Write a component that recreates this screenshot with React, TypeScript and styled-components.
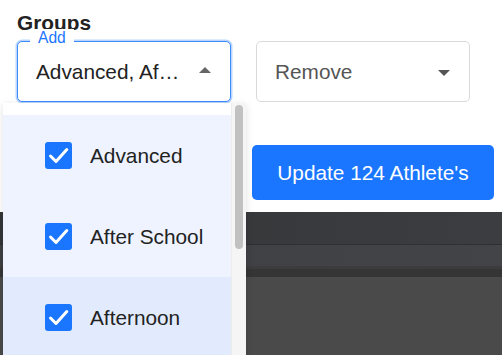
import React from "react";
import styled, { createGlobalStyle } from "styled-components";

const GlobalStyle = createGlobalStyle`
  html, body {
    margin: 0;
    padding: 0;
    overflow: hidden;
    background: #ffffff;
  }
  body {
    font-family: "Liberation Sans", Arial, Helvetica, sans-serif;
    -webkit-font-smoothing: antialiased;
  }
`;

const Page = styled.div`
  width: 502px;
  height: 355px;
  display: flex;
  flex-direction: column;
  overflow: hidden;
`;

const Top = styled.section`
  position: relative;
  z-index: 2;
  padding: 11px 8px 12px 17px;
  background: #ffffff;
`;

const Heading = styled.div`
  font-size: 20.8px;
  line-height: 24px;
  font-weight: 700;
  color: #222222;
`;

const SelectRow = styled.div`
  display: flex;
  gap: 25px;
  margin-top: 6px;
`;

const SelectBox = styled.div<{ $focused?: boolean }>`
  position: relative;
  box-sizing: border-box;
  width: 214px;
  height: 61px;
  display: flex;
  align-items: center;
  gap: 16px;
  padding: 0 19px 0 18px;
  border-radius: 5px;
  border: 1px solid ${(p) => (p.$focused ? "#3f8cff" : "#d9d9d9")};
  box-shadow: ${(p) => (p.$focused ? "0 0 0 1.5px rgba(26, 118, 255, 0.3)" : "none")};
  background: #ffffff;
`;

const FloatingLabel = styled.span`
  position: absolute;
  left: 12px;
  top: -13px;
  padding: 0 8px;
  background: #ffffff;
  font-size: 15.6px;
  line-height: 18px;
  color: #1a76ff;
`;

const ValueText = styled.span<{ $placeholder?: boolean }>`
  flex: 1;
  min-width: 0;
  overflow: hidden;
  white-space: nowrap;
  text-overflow: ellipsis;
  font-size: 20.8px;
  line-height: 24px;
  color: ${(p) => (p.$placeholder ? "#555555" : "#222222")};
`;

const Caret = styled.span<{ $up?: boolean }>`
  flex: none;
  width: 0;
  height: 0;
  border-left: 6.5px solid transparent;
  border-right: 6.5px solid transparent;
  ${(p) =>
    p.$up
      ? "border-bottom: 6.5px solid #666666; margin-top: -3px;"
      : "border-top: 6px solid #555555; margin-top: 2px;"}
`;

const Menu = styled.div`
  position: absolute;
  top: calc(100% + 2px);
  left: -15px;
  width: 243px;
  height: 252px;
  display: flex;
  overflow: hidden;
  background: #ffffff;
  box-shadow: 0 2px 8px rgba(0, 0, 0, 0.12);
  z-index: 5;
`;

const OptionList = styled.div`
  flex: 1;
  padding-top: 12px;
  display: flex;
  flex-direction: column;
`;

const Option = styled.div<{ $active?: boolean }>`
  flex: none;
  height: 81px;
  display: flex;
  align-items: center;
  gap: 18px;
  padding-left: 42px;
  background: ${(p) => (p.$active ? "#e2ebfd" : "#eef3ff")};
  font-size: 20.8px;
  color: #222222;
`;

const Box = styled.span`
  flex: none;
  width: 27px;
  height: 27px;
  border-radius: 3px;
  background: #1a76ff;
  display: flex;
`;

const ScrollTrack = styled.div`
  flex: none;
  width: 15px;
  box-sizing: border-box;
  padding: 2px 0 0 3px;
  background: #f5f5f5;
  border-left: 1px solid #ececec;
`;

const Thumb = styled.div`
  width: 8px;
  height: 144px;
  border-radius: 4px;
  background: #c1c1c1;
`;

const ButtonRow = styled.div`
  display: flex;
  justify-content: flex-end;
  margin-top: 43px;
`;

const PrimaryButton = styled.button`
  width: 242px;
  height: 55px;
  border: none;
  border-radius: 5px;
  background: #1a76ff;
  color: #ffffff;
  font-family: inherit;
  font-size: 20.8px;
  padding: 0;
`;

const Dark = styled.section`
  flex: 1;
  display: flex;
  flex-direction: column;
  background: #4a4a4a;
`;

const Band = styled.div<{ $h: number; $bg: string }>`
  flex: none;
  height: ${(p) => p.$h}px;
  background: ${(p) => p.$bg};
`;

const Check = () => (
  <svg width="27" height="27" viewBox="0 0 27 27">
    <polyline
      points="5.5,14 11,19.5 21.8,7.5"
      fill="none"
      stroke="#ffffff"
      strokeWidth="3"
      strokeLinecap="round"
      strokeLinejoin="round"
    />
  </svg>
);

const options = [
  { label: "Advanced", active: false },
  { label: "After School", active: false },
  { label: "Afternoon", active: true },
  { label: "Beginner", active: false },
];

export default function App() {
  return (
    <Page>
      <GlobalStyle />
      <Top>
        <Heading>Groups</Heading>
        <SelectRow>
          <SelectBox $focused>
            <FloatingLabel>Add</FloatingLabel>
            <ValueText>Advanced, After School, Afternoon</ValueText>
            <Caret $up />
            <Menu>
              <OptionList>
                {options.map((o) => (
                  <Option key={o.label} $active={o.active}>
                    <Box>
                      <Check />
                    </Box>
                    {o.label}
                  </Option>
                ))}
              </OptionList>
              <ScrollTrack>
                <Thumb />
              </ScrollTrack>
            </Menu>
          </SelectBox>
          <SelectBox>
            <ValueText $placeholder>Remove</ValueText>
            <Caret />
          </SelectBox>
        </SelectRow>
        <ButtonRow>
          <PrimaryButton>Update 124 Athlete's</PrimaryButton>
        </ButtonRow>
      </Top>
      <Dark>
        <Band $h={32} $bg="linear-gradient(to right, #343537, #3c3d40)" />
        <Band $h={1} $bg="#2f3032" />
        <Band $h={21} $bg="linear-gradient(to right, #3e3f42, #434447)" />
        <Band $h={3} $bg="#3c3c3c" />
        <Band $h={8} $bg="#353535" />
      </Dark>
    </Page>
  );
}
